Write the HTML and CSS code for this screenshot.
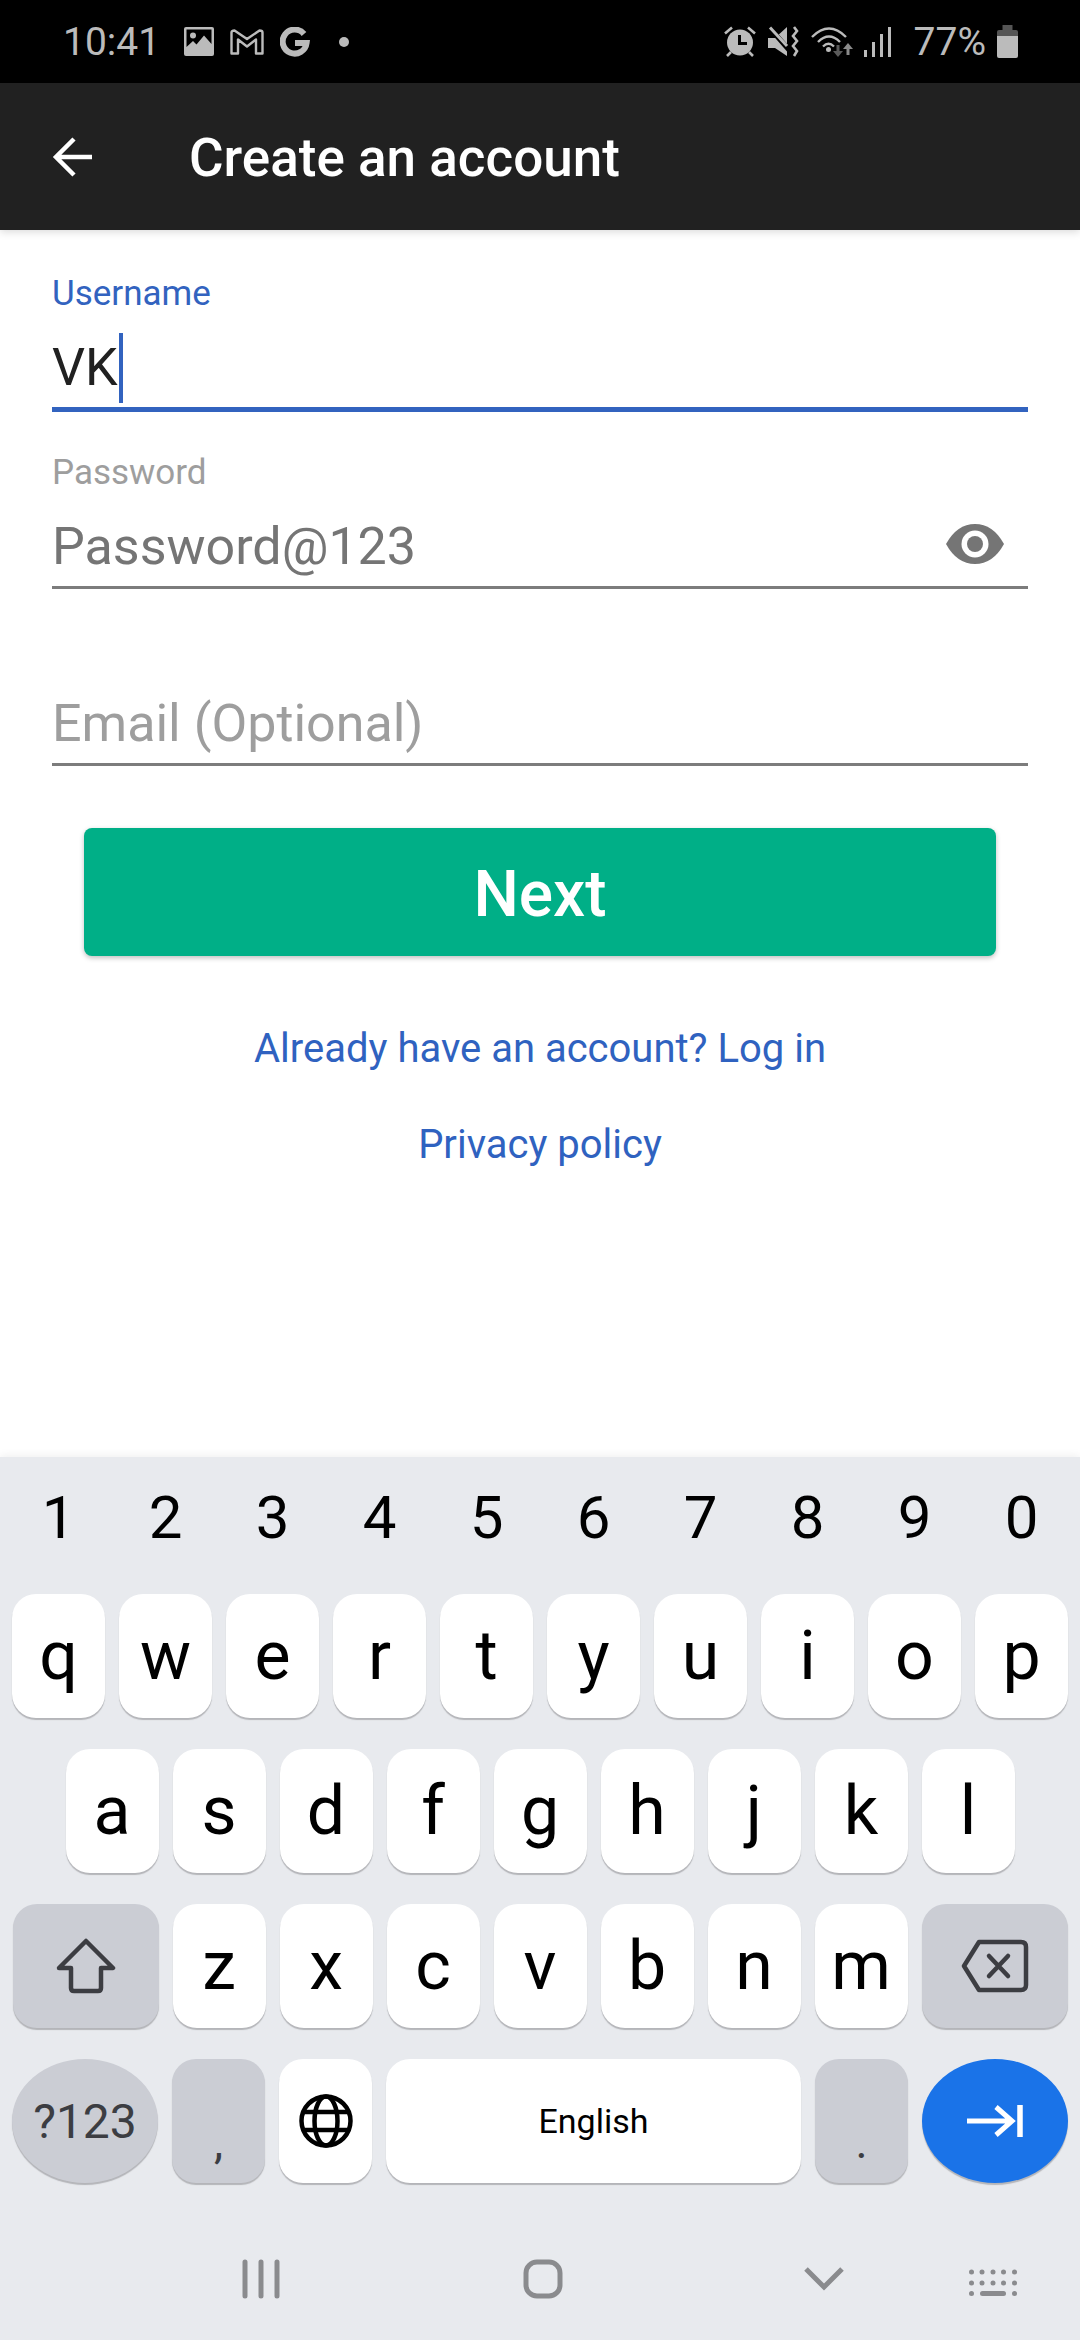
FILE: index.html
```html
<!DOCTYPE html>
<html lang="en">
<head>
    <meta charset="UTF-8">
    <meta name="viewport" content="width=device-width, initial-scale=1.0">
    <title>Create an account</title>
    <link rel="stylesheet" href="styles.css">
</head>
<body>
    <div class="status-bar">
        <span class="status-text time">10:41</span>
        <svg class="st-image" width="30" height="29" viewBox="0 0 30 29">
            <rect x="0" y="0" width="30" height="29" rx="2" fill="#bbb"/>
            <path d="M2.5 2.5 H27.5 V17 L20 8.5 L12.5 17.5 L9 14 L2.5 20 Z" fill="#000"/>
            <circle cx="9" cy="8.5" r="3" fill="#bbb"/>
        </svg>
        <svg class="st-gmail" width="34" height="26" viewBox="0 0 34 26">
            <path d="M1.5 24.5 V3.5 Q1.5 1.5 4.5 1.5 L17 10 L29.5 1.5 Q32.5 1.5 32.5 3.5 V24.5 H26 V10.5 L17 17.5 L8 10.5 V24.5 Z" fill="none" stroke="#bbb" stroke-width="2.4" stroke-linejoin="round"/>
        </svg>
        <svg class="st-g" width="30" height="30" viewBox="0 0 30 30">
            <path d="M24 7 A12 12 0 1 0 26.6 16 H15" fill="none" stroke="#bbb" stroke-width="6"/>
        </svg>
        <span class="st-dot"></span>

        <svg class="st-alarm" width="32" height="31" viewBox="0 0 32 31">
            <circle cx="16" cy="16.5" r="13" fill="#bbb"/>
            <path d="M15.5 9 V17.5 H23" fill="none" stroke="#000" stroke-width="3"/>
            <path d="M1 7.5 L8 1.5 M31 7.5 L24 1.5 M3 30 L7 26 M29 30 L25 26" stroke="#bbb" stroke-width="2.6"/>
        </svg>
        <svg class="st-mute" width="31" height="31" viewBox="0 0 31 31">
            <path d="M0 12 H7 L19 1 V30 L7 22 H0 Z" fill="#bbb"/>
            <path d="M0 0 L22 25" stroke="#000" stroke-width="5"/>
            <path d="M2 1.5 L19 20" stroke="#bbb" stroke-width="3"/>
            <path d="M26 1 L29 5 L25 10 L29 15 L25 20 L29 25 L26 30" fill="none" stroke="#bbb" stroke-width="2.6"/>
        </svg>
        <svg class="st-wifi" width="42" height="31" viewBox="0 0 42 31">
            <path d="M1 11 Q18 -6 35 11 M7 16 Q18 5 29 16 M12 20.5 Q17.5 15 23 20.5" fill="none" stroke="#bbb" stroke-width="2.4"/>
            <circle cx="17.5" cy="23.5" r="2.5" fill="#bbb"/>
            <path d="M27 19 V29" stroke="#5a5a5a" stroke-width="3"/>
            <path d="M22 25 H32 L27 31 Z" fill="#5a5a5a"/>
            <path d="M37 21 V29" stroke="#8a8a8a" stroke-width="3"/>
            <path d="M32 23 H42 L37 17 Z" fill="#8a8a8a"/>
        </svg>
        <svg class="st-signal" width="27" height="30" viewBox="0 0 27 30">
            <rect x="0" y="23" width="3" height="7" fill="#bbb"/>
            <rect x="8" y="15" width="3" height="15" fill="#bbb"/>
            <rect x="16" y="7" width="3" height="23" fill="#bbb"/>
            <rect x="24" y="0" width="3" height="30" fill="#bbb"/>
        </svg>
        <span class="status-text pct">77%</span>
        <svg class="st-battery" width="21" height="33" viewBox="0 0 21 33">
            <path d="M5.5 0 H15.5 V5 H19 Q21 5 21 7 V11 H0 V7 Q0 5 2 5 H5.5 Z" fill="#555"/>
            <path d="M0 11 H21 V31 Q21 33 19 33 H2 Q0 33 0 31 Z" fill="#bbb"/>
        </svg>
    </div>

    <header class="toolbar">
        <svg class="back-icon" width="40" height="42" viewBox="0 0 40 42">
            <path d="M40 21 H4 M22 3 L4 21 L22 39" fill="none" stroke="#fff" stroke-width="4.5"/>
        </svg>
        <h1 class="toolbar-title">Create an account</h1>
    </header>

    <main class="form">
        <div class="field field-active">
            <label class="field-label">Username</label>
            <div class="field-value">VK<span class="cursor"></span></div>
        </div>
        <div class="field">
            <label class="field-label label-muted">Password</label>
            <div class="field-value value-grey">
                Password@123
                <svg class="eye-icon" width="58" height="40" viewBox="0 0 58 40">
                    <path d="M0 20 Q11 0 29 0 Q47 0 58 20 Q47 40 29 40 Q11 40 0 20 Z" fill="#757575"/>
                    <circle cx="29" cy="20" r="13.5" fill="#fff"/>
                    <circle cx="29" cy="20" r="8" fill="#757575"/>
                </svg>
            </div>
        </div>
        <div class="field">
            <div class="field-value value-hint">Email (Optional)</div>
        </div>
        <button class="next-btn">Next</button>
        <a class="form-link link-login">Already have an account? Log in</a>
        <a class="form-link link-privacy">Privacy policy</a>
    </main>

    <div class="keyboard">
        <div class="key-row digit-row">
            <span class="digit">1</span><span class="digit">2</span><span class="digit">3</span><span class="digit">4</span><span class="digit">5</span><span class="digit">6</span><span class="digit">7</span><span class="digit">8</span><span class="digit">9</span><span class="digit">0</span>
        </div>
        <div class="key-rows">
            <div class="key-row">
                <span class="key">q</span><span class="key">w</span><span class="key">e</span><span class="key">r</span><span class="key">t</span><span class="key">y</span><span class="key">u</span><span class="key">i</span><span class="key">o</span><span class="key">p</span>
            </div>
            <div class="key-row">
                <span class="key">a</span><span class="key">s</span><span class="key">d</span><span class="key">f</span><span class="key">g</span><span class="key">h</span><span class="key">j</span><span class="key">k</span><span class="key">l</span>
            </div>
            <div class="key-row">
                <span class="key key-wide key-grey">
                    <svg width="60" height="56" viewBox="0 0 60 56">
                        <path d="M30 3 L57 30 H45 V50 Q45 53 42 53 H18 Q15 53 15 50 V30 H3 Z" fill="none" stroke="#3c3d42" stroke-width="4.5" stroke-linejoin="round"/>
                    </svg>
                </span>
                <span class="key">z</span><span class="key">x</span><span class="key">c</span><span class="key">v</span><span class="key">b</span><span class="key">n</span><span class="key">m</span>
                <span class="key key-wide key-grey">
                    <svg width="68" height="54" viewBox="0 0 68 54">
                        <path d="M18 3 H60 Q65 3 65 8 V46 Q65 51 60 51 H18 L3 27 Z" fill="none" stroke="#3c3d42" stroke-width="4.5" stroke-linejoin="round"/>
                        <path d="M28 17 L47 37 M47 17 L28 37" stroke="#3c3d42" stroke-width="4.5" stroke-linecap="round"/>
                    </svg>
                </span>
            </div>
            <div class="key-row">
                <span class="key key-wide key-grey key-round sym-key">?123</span>
                <span class="key key-grey key-punct">,</span>
                <span class="key">
                    <svg width="54" height="54" viewBox="0 0 54 54">
                        <circle cx="27" cy="27" r="24.5" fill="none" stroke="#000" stroke-width="4.5"/>
                        <ellipse cx="27" cy="27" rx="11.5" ry="24.5" fill="none" stroke="#000" stroke-width="4.5"/>
                        <path d="M4 18 H50 M4 36 H50" stroke="#000" stroke-width="4.5"/>
                    </svg>
                </span>
                <span class="key key-space">English</span>
                <span class="key key-grey key-punct">.</span>
                <span class="key key-wide key-round key-enter">
                    <svg width="56" height="32" viewBox="0 0 56 32">
                        <path d="M0 16 H46 M29 2 L45 16 L29 30" fill="none" stroke="#fff" stroke-width="5"/>
                        <path d="M53 0 V32" stroke="#fff" stroke-width="5.5"/>
                    </svg>
                </span>
            </div>
        </div>
        <div class="nav-bar">
            <svg class="nav-recents" width="38" height="40" viewBox="0 0 38 40">
                <path d="M3 3 V37 M19 3 V37 M35 3 V37" stroke="#8a8b8e" stroke-width="5" stroke-linecap="round"/>
            </svg>
            <svg class="nav-home" width="40" height="40" viewBox="0 0 40 40">
                <rect x="3" y="3" width="34" height="34" rx="11" fill="none" stroke="#8a8b8e" stroke-width="5"/>
            </svg>
            <svg class="nav-back" width="40" height="24" viewBox="0 0 40 24">
                <path d="M2 2 L20 20 L38 2" fill="none" stroke="#8a8b8e" stroke-width="5"/>
            </svg>
            <svg class="nav-kb" width="48" height="28" viewBox="0 0 48 28">
                <g fill="#8a8b8e">
                    <circle cx="2.5" cy="3" r="2.5"/><circle cx="13" cy="3" r="2.5"/><circle cx="24" cy="3" r="2.5"/><circle cx="34.5" cy="3" r="2.5"/><circle cx="45.5" cy="3" r="2.5"/>
                    <circle cx="2.5" cy="14" r="2.5"/><circle cx="13" cy="14" r="2.5"/><circle cx="24" cy="14" r="2.5"/><circle cx="34.5" cy="14" r="2.5"/><circle cx="45.5" cy="14" r="2.5"/>
                    <circle cx="2.5" cy="24.5" r="2.5"/><rect x="11" y="22" width="26" height="5" rx="2.5"/><circle cx="45.5" cy="24.5" r="2.5"/>
                </g>
            </svg>
        </div>
    </div>
</body>
</html>
```

FILE: styles.css
```css
* {
    box-sizing: border-box;
}

html, body {
    margin: 0;
    padding: 0;
}

body {
    width: 1080px;
    height: 2340px;
    display: flex;
    flex-direction: column;
    font-family: Roboto, "Liberation Sans", sans-serif;
    background-color: #fff;
    overflow: hidden;
}

/* status bar */
.status-bar {
    height: 83px;
    background-color: #000;
    display: flex;
    align-items: center;
    padding: 0 62px 0 63px;
    color: #bbb;
}

.status-text {
    font-size: 39px;
    line-height: 38px;
}

.st-image {
    margin-left: 24px;
}

.st-gmail,
.st-g {
    margin-left: 16px;
}

.st-dot {
    width: 10px;
    height: 10px;
    border-radius: 50%;
    background-color: #bbb;
    margin-left: 29px;
}

.st-alarm {
    margin-left: auto;
}

.st-mute,
.st-wifi {
    margin-left: 12px;
}

.st-signal {
    margin-left: 11px;
}

.pct {
    margin-left: 23px;
}

.st-battery {
    margin-left: 11px;
}

/* toolbar */
.toolbar {
    height: 147px;
    background-color: #212121;
    display: flex;
    align-items: center;
    padding-left: 52px;
    box-shadow: 0 2px 8px rgba(0, 0, 0, 0.15);
    position: relative;
}

.back-icon {
    margin-right: 97px;
}

.toolbar-title {
    margin: 0;
    padding-top: 3px;
    font-size: 53px;
    font-weight: 500;
    color: #fff;
}

/* form */
.form {
    flex: 1;
    display: flex;
    flex-direction: column;
    padding: 0 52px;
}

.field {
    height: 177px;
    flex: none;
    display: flex;
    flex-direction: column;
    justify-content: flex-end;
    border-bottom: 3px solid #7c7c7c;
    padding-bottom: 9px;
}

.field-active {
    height: 182px;
    border-bottom: 5px solid #3263bf;
}

.field-label {
    font-size: 35px;
    line-height: 40px;
    margin-bottom: 24px;
    color: #3263bf;
}

.label-muted {
    color: #9e9e9e;
}

.field-value {
    font-size: 52px;
    line-height: 60px;
    color: #212121;
    display: flex;
    align-items: center;
    height: 60px;
}

.value-grey {
    color: #757575;
    justify-content: space-between;
}

.value-hint {
    color: #9e9e9e;
}

.cursor {
    width: 4px;
    height: 70px;
    margin: 0 0 0 1px;
    background-color: #3263bf;
}

.eye-icon {
    margin: 0 24px 6px 0;
}

.next-btn {
    flex: none;
    height: 128px;
    margin: 62px 32px 0;
    padding-top: 6px;
    border: none;
    border-radius: 8px;
    background-color: #00af87;
    color: #fff;
    font-family: inherit;
    font-size: 64px;
    font-weight: 500;
    box-shadow: 0 2px 5px rgba(0, 0, 0, 0.25);
}

.form-link {
    text-align: center;
    font-size: 40px;
    line-height: 48px;
    color: #2f62c0;
}

.link-login {
    margin-top: 69px;
}

.link-privacy {
    margin-top: 48px;
}

/* keyboard */
.keyboard {
    height: 883px;
    flex: none;
    background-color: #e8eaee;
    padding: 0 12px;
    box-shadow: 0 -2px 8px rgba(0, 0, 0, 0.06);
    position: relative;
}

.key-row {
    display: flex;
    justify-content: center;
    gap: 14px;
}

.digit-row {
    height: 120px;
    margin-bottom: 17px;
    align-items: center;
}

.digit {
    width: 93px;
    text-align: center;
    font-size: 60px;
    color: #000;
}

.key-rows {
    display: flex;
    flex-direction: column;
    gap: 31px;
}

.key {
    width: 93px;
    height: 124px;
    flex: none;
    display: flex;
    align-items: center;
    justify-content: center;
    background-color: #fff;
    border-radius: 24px;
    box-shadow: 0 2px 1px #b4b5b9;
    font-size: 68px;
    color: #000;
}

.key-wide {
    width: 146px;
}

.key-grey {
    background-color: #cbcdd4;
    color: #3c3d42;
}

.key-round {
    border-radius: 50%;
}

.sym-key {
    font-size: 48px;
}

.key-punct {
    font-size: 46px;
    padding-top: 42px;
}

.key-space {
    flex: 1;
    font-size: 34px;
}

.key-enter {
    background-color: #1a73e8;
}

.nav-bar {
    display: flex;
    align-items: center;
    height: 42px;
    margin-top: 75px;
    padding-left: 230px;
}

.nav-home {
    margin-left: 243px;
}

.nav-back {
    margin-left: 241px;
}

.nav-kb {
    margin-left: 125px;
    margin-top: 8px;
}
```
